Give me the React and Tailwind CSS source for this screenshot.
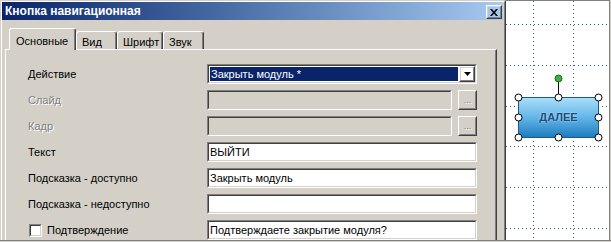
import React from 'react'

const sunkenOuter = 'border border-t-[#808080] border-l-[#808080] border-b-white border-r-white'
const sunkenInner = 'border border-t-[#404040] border-l-[#404040] border-b-[#d4d0c8] border-r-[#d4d0c8]'
const raisedOuter = 'border border-t-white border-l-white border-b-[#404040] border-r-[#404040]'
const raisedInner = 'border border-t-[#d4d0c8] border-l-[#d4d0c8] border-b-[#808080] border-r-[#808080]'

function Field({ value = '', disabled = false, w = 'w-[270px]' }) {
  return (
    <div className={`${w} h-[20px] ${sunkenOuter}`}>
      <div className={`h-full ${sunkenInner} ${disabled ? 'bg-[#d4d0c8]' : 'bg-white'} flex items-center pl-[1px] text-black whitespace-nowrap overflow-hidden`}>
        {value}
      </div>
    </div>
  )
}

function DotsButton() {
  return (
    <div className={`w-[19px] h-[20px] ${raisedOuter}`}>
      <div className={`h-full ${raisedInner} flex items-end justify-center pb-[3px] text-[9px] leading-none text-[#808080] [text-shadow:1px_1px_0_#fff]`}>
        ...
      </div>
    </div>
  )
}

function Label({ children, disabled }) {
  return (
    <div className={`w-[179px] ${disabled ? 'text-[#808080] [text-shadow:1px_1px_0_#fff]' : 'text-black'}`}>{children}</div>
  )
}

const tabs = [
  { t: 'Вид', w: 'w-[41px]' },
  { t: 'Шрифт', w: 'w-[46px]' },
  { t: 'Звук', w: 'w-[41px]' },
]

export default function App() {
  const hLines = [23, 64, 105, 145, 186, 227]
  const vLines = [27, 67]
  const handles = [[12, 96], [52, 96], [92, 96], [12, 116], [92, 116], [12, 136], [52, 136], [92, 136]]

  return (
    <div className="w-[611px] h-[242px] overflow-hidden bg-[#d4d0c8] flex flex-col font-['Liberation_Sans',Arial,sans-serif] text-[11px]">
      <div className="h-[240px] flex">
        {/* dialog */}
        <div className="w-[506px] h-full border-l border-t border-r border-l-[#d4d0c8] border-t-[#d4d0c8] border-r-[#404040]">
          <div className="h-full border-l border-t border-r border-l-white border-t-white border-r-[#808080] pr-[1px] flex flex-col">
            <div className="h-[18px] bg-linear-to-r from-[#0a246a] to-[#a6caf0] flex items-center justify-between pl-[3px] pr-[1px]">
              <span className="text-white font-bold text-[12px] leading-none">Кнопка навигационная</span>
              <div className={`w-[16px] h-[14px] mt-[2px] ${raisedOuter}`}>
                <div className={`h-full ${raisedInner} flex items-center justify-center`}>
                  <svg width="8" height="7" viewBox="0 0 8 7">
                    <path d="M0 0h2l2 2.5 2-2.5h2L5 3.5 8 7H6L4 4.5 2 7H0l3-3.5z" fill="#000" />
                  </svg>
                </div>
              </div>
            </div>

            <div className="mt-[8px] ml-[7px] h-[21px] flex items-end relative z-10">
              <div className="w-[67px] h-[22px] -mb-px bg-[#d4d0c8] border-t border-l border-r border-t-white border-l-white border-r-[#404040] shadow-[inset_-1px_0_0_#808080] rounded-t-[3px] pl-[6px] pt-[4px]">
                Основные
              </div>
              {tabs.map(x => (
                <div key={x.t} className={`${x.w} h-[18px] border-t border-l border-r border-t-white border-l-white border-r-[#404040] shadow-[inset_-1px_0_0_#808080] rounded-t-[3px] pl-[5px] pt-[2px]`}>
                  {x.t}
                </div>
              ))}
            </div>

            <div className="ml-[3px] w-[492px] flex-1 border-t border-l border-r border-t-white border-l-white border-r-[#404040] shadow-[inset_-1px_0_0_#808080] pt-[14px] pl-[22px] flex flex-col gap-[6px]">
              <div className="h-[20px] flex items-center">
                <Label>Действие</Label>
                <div className={`w-[270px] h-[20px] ${sunkenOuter}`}>
                  <div className={`h-full ${sunkenInner} bg-white flex`}>
                    <div className="flex-1 p-px">
                      <div className="h-full bg-[#0a246a] text-white flex items-center pl-px whitespace-nowrap">Закрыть модуль *</div>
                    </div>
                    <div className={`w-[16px] h-full ${raisedOuter}`}>
                      <div className={`h-full ${raisedInner} flex items-center justify-center`}>
                        <svg width="7" height="4" viewBox="0 0 7 4"><path d="M0 0h7L3.5 4z" fill="#000" /></svg>
                      </div>
                    </div>
                  </div>
                </div>
              </div>
              <div className="h-[20px] flex items-center">
                <Label disabled>Слайд</Label>
                <div className="w-[270px] flex gap-[6px]"><Field disabled w="w-[245px]" /><DotsButton /></div>
              </div>
              <div className="h-[20px] flex items-center">
                <Label disabled>Кадр</Label>
                <div className="w-[270px] flex gap-[6px]"><Field disabled w="w-[245px]" /><DotsButton /></div>
              </div>
              <div className="h-[20px] flex items-center">
                <Label>Текст</Label>
                <Field value="ВЫЙТИ" />
              </div>
              <div className="h-[20px] flex items-center">
                <Label>Подсказка - доступно</Label>
                <Field value="Закрыть модуль" />
              </div>
              <div className="h-[20px] flex items-center">
                <Label>Подсказка - недоступно</Label>
                <Field />
              </div>
              <div className="h-[20px] flex items-center">
                <div className="w-[179px] flex items-center gap-[5px] pl-px">
                  <div className={`w-[13px] h-[13px] ${sunkenOuter}`}>
                    <div className={`h-full ${sunkenInner} bg-white`} />
                  </div>
                  <span>Подтверждение</span>
                </div>
                <Field value="Подтверждаете закрытие модуля?" />
              </div>
            </div>
          </div>
        </div>

        {/* canvas */}
        <div className="relative w-[104px] h-full bg-white border-t border-r border-t-[#808080] border-r-[#808080]">
          <svg className="absolute inset-0" width="103" height="239">
            {hLines.map(y => (
              <line key={'h' + y} x1="0" y1={y + 0.5} x2="103" y2={y + 0.5} stroke="#2f5f6f" strokeDasharray="1 3" />
            ))}
            {vLines.map(x => (
              <line key={'v' + x} x1={x + 0.5} y1="0" x2={x + 0.5} y2="239" stroke="#2f5f6f" strokeDasharray="1 3" />
            ))}
          </svg>
          <div className="absolute left-[12px] top-[96px] w-[81px] h-[41px] rounded-[3px] border border-[#1d5a86] bg-linear-to-b from-[#a9ddf8] via-[#62b5e8] to-[#1a7dc0] flex items-center justify-center">
            <span className="font-bold text-[11px] text-[#1c4a7a] [text-shadow:0_0_2px_#cfeeff]">ДАЛЕЕ</span>
          </div>
          <svg className="absolute inset-0 pointer-events-none" width="103" height="239">
            <line x1="52.5" y1="80" x2="52.5" y2="93" stroke="#000" />
            <circle cx="52.5" cy="77.5" r="3.5" fill="#3cb043" stroke="#1a6a1a" />
            {handles.map(([x, y]) => (
              <circle key={x + '-' + y} cx={x + 0.5} cy={y + 0.5} r="3.5" fill="#fff" stroke="#000" />
            ))}
          </svg>
        </div>
      </div>
      <div className="h-px bg-[#808080]" />
    </div>
  )
}
